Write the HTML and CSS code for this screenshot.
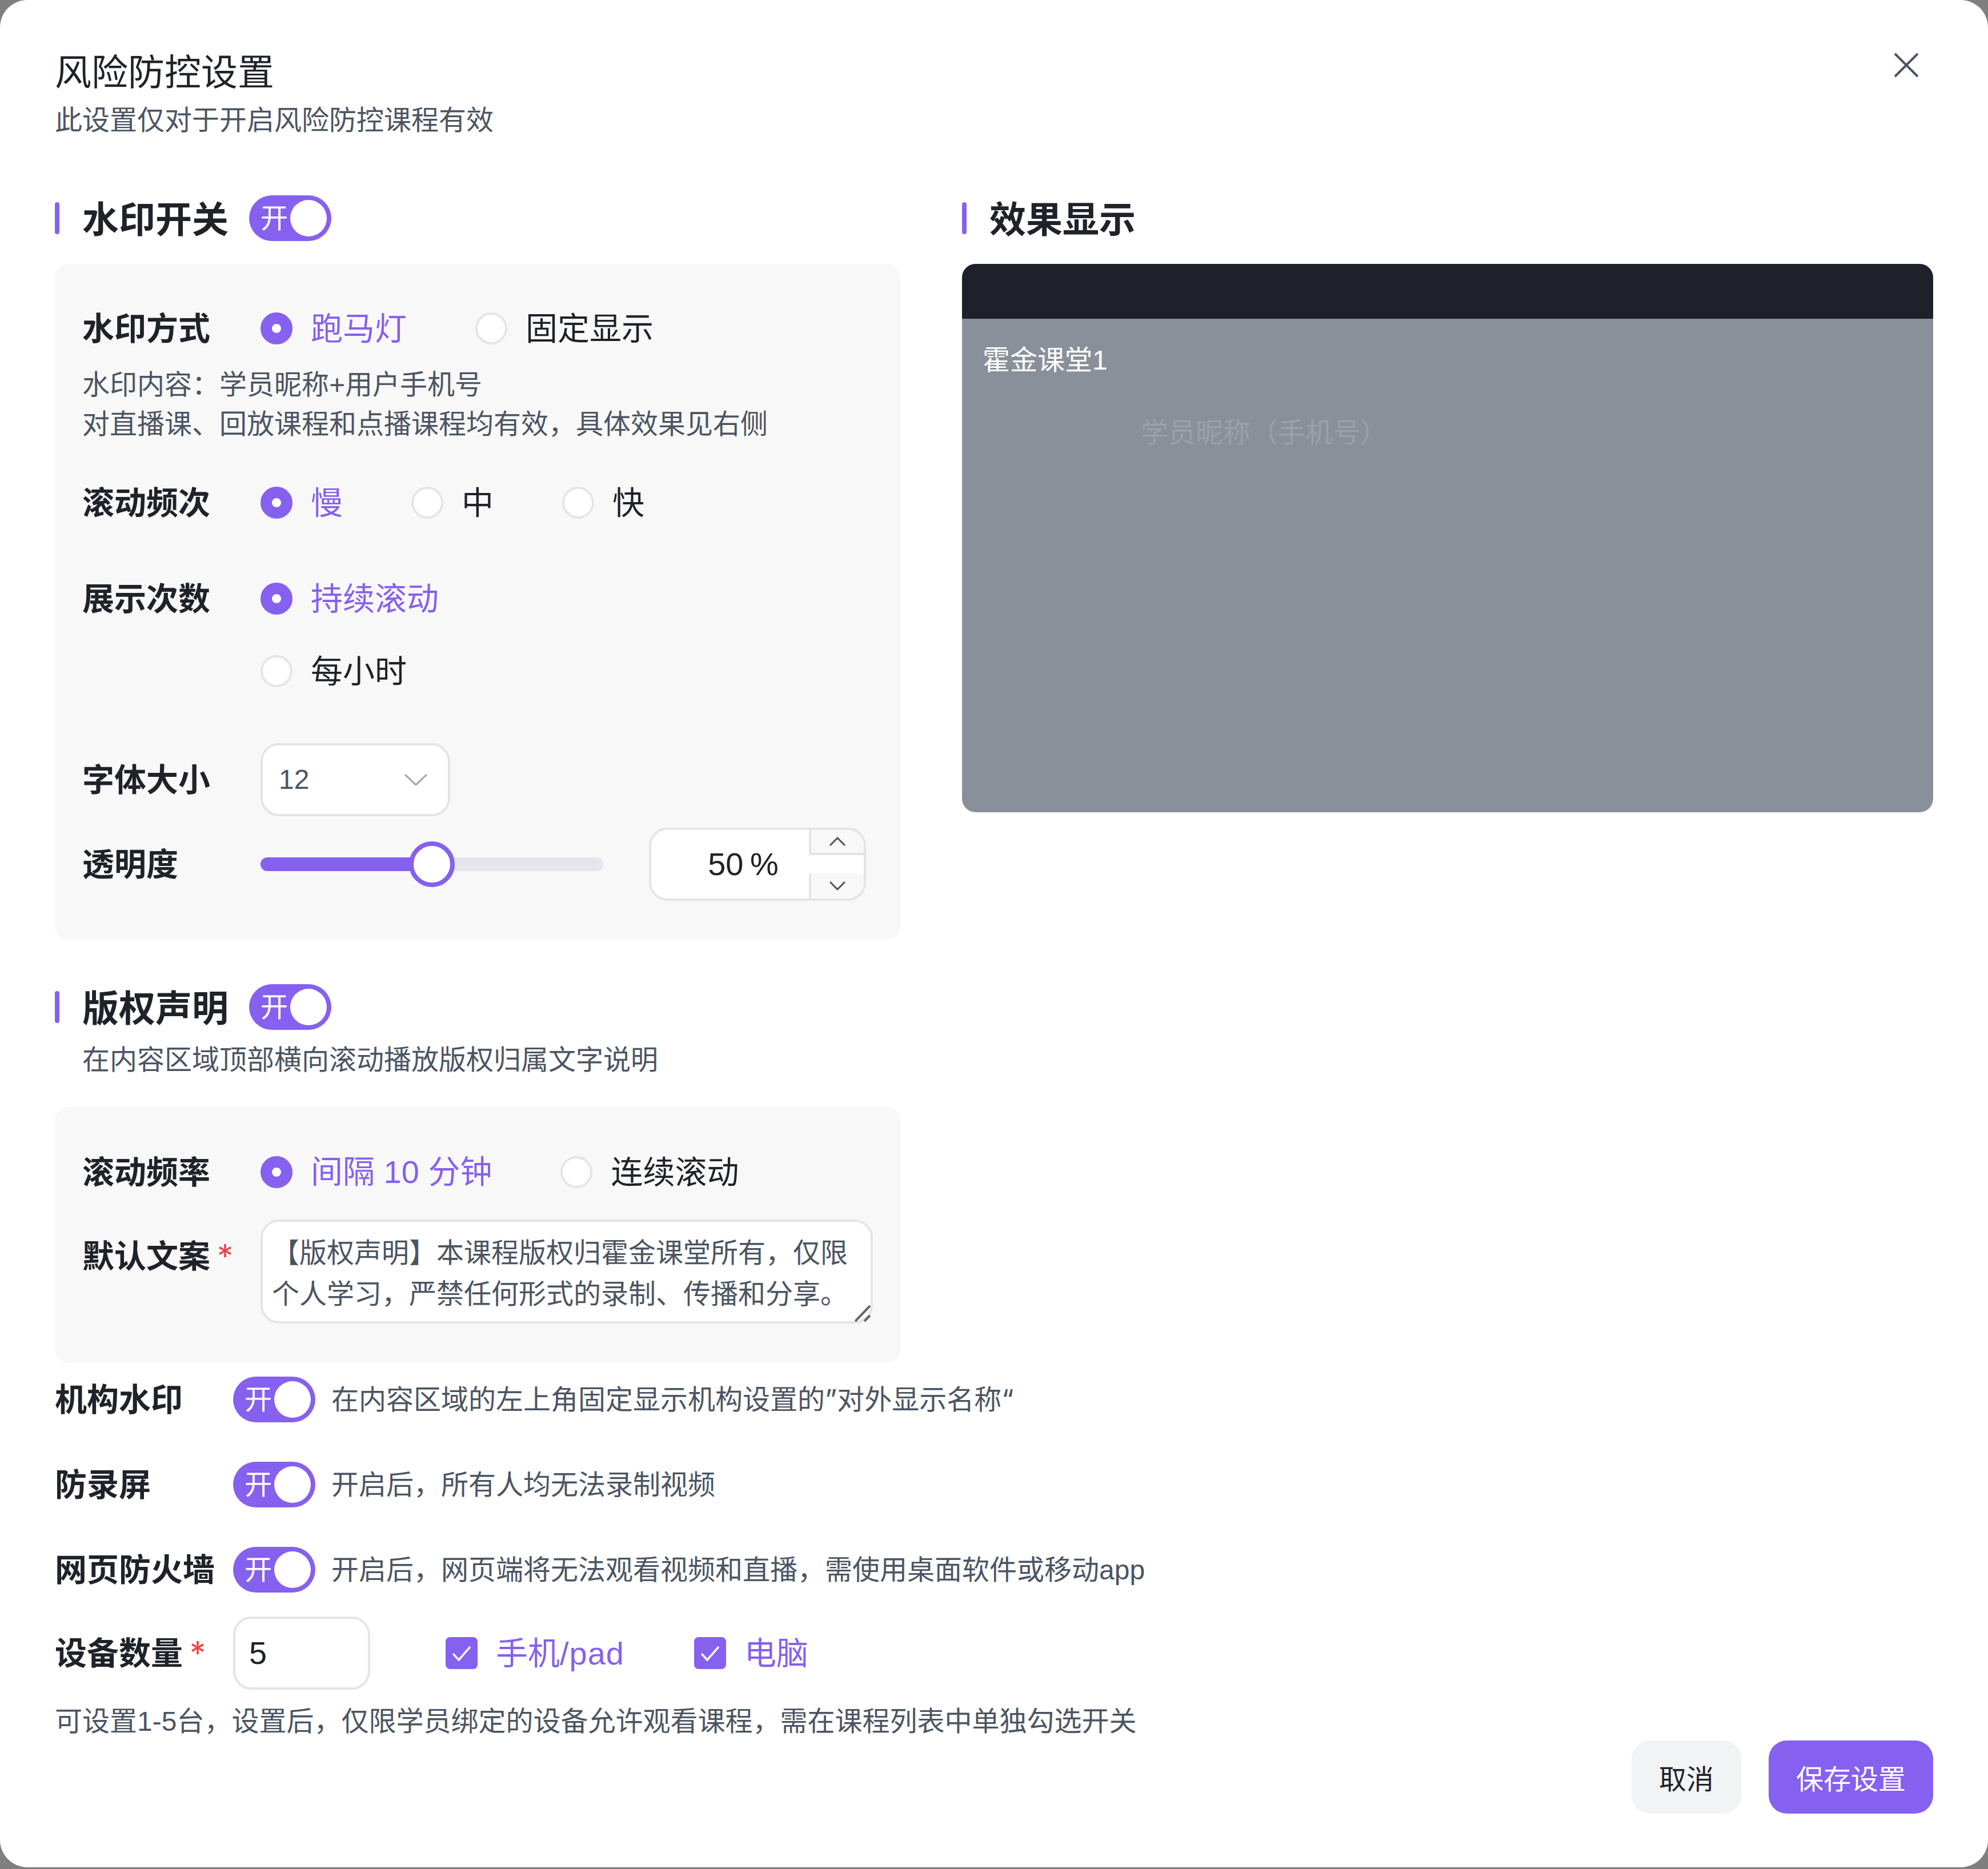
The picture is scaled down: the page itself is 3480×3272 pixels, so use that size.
FILE: index.html
```html
<!DOCTYPE html>
<html lang="zh-CN">
  <head>
    <meta charset="UTF-8" />
    <title>风险防控设置</title>
    <link rel="stylesheet" href="styles.css">
  </head>
  <body>
    <div class="modal">
      <svg class="close" viewBox="0 0 44 44"><path d="M2 2L42 42M42 2L2 42"></path></svg>
      <h1 class="title">风险防控设置</h1>
      <p class="sub">此设置仅对于开启风险防控课程有效</p>

      <div class="columns">
        <div class="col-left">
          <div class="heading">
            <span class="heading-text">水印开关</span>
            <div class="switch"><span>开</span><i></i></div>
          </div>
          <div class="panel panel-watermark">
            <div class="row">
              <span class="label">水印方式</span>
              <div class="radio-group">
                <label class="radio on"><i></i>跑马灯</label>
                <label class="radio"><i></i>固定显示</label>
              </div>
            </div>
            <p class="info">水印内容：学员昵称<span class="lat">+</span>用户手机号<br>对直播课、回放课程和点播课程均有效，具体效果见右侧</p>
            <div class="row row-freq">
              <span class="label">滚动频次</span>
              <div class="radio-group">
                <label class="radio on"><i></i>慢</label>
                <label class="radio"><i></i>中</label>
                <label class="radio"><i></i>快</label>
              </div>
            </div>
            <div class="row row-times">
              <span class="label">展示次数</span>
              <label class="radio on"><i></i>持续滚动</label>
            </div>
            <div class="row row-hour">
              <span class="label"></span>
              <label class="radio"><i></i>每小时</label>
            </div>
            <div class="row row-font">
              <span class="label">字体大小</span>
              <div class="select">
                <span class="lat">12</span>
                <svg viewBox="0 0 40 20"><path d="M1 1L20 19L39 1"></path></svg>
              </div>
            </div>
            <div class="row row-opacity">
              <span class="label">透明度</span>
              <div class="slider">
                <div class="slider-fill" style="width: 50%"><i></i></div>
              </div>
              <div class="number">
                <div class="number-value lat">50 %</div>
                <div class="number-ctrl">
                  <div class="ctrl-up"><svg viewBox="0 0 28 16"><path d="M1 15L14 2L27 15"></path></svg></div>
                  <div class="ctrl-down"><svg viewBox="0 0 28 16"><path d="M1 1L14 14L27 1"></path></svg></div>
                </div>
              </div>
            </div>
          </div>

          <div class="heading heading-copy">
            <span class="heading-text">版权声明</span>
            <div class="switch"><span>开</span><i></i></div>
          </div>
          <p class="desc">在内容区域顶部横向滚动播放版权归属文字说明</p>
          <div class="panel panel-copy">
            <div class="row">
              <span class="label">滚动频率</span>
              <div class="radio-group">
                <label class="radio on"><i></i><span>间隔<span class="lat"> 10 </span>分钟</span></label>
                <label class="radio"><i></i>连续滚动</label>
              </div>
            </div>
            <div class="row row-text">
              <span class="label">默认文案<b class="star">*</b></span>
              <div class="textarea-wrap">
                <textarea class="textarea" spellcheck="false">【版权声明】本课程版权归霍金课堂所有，仅限个人学习，严禁任何形式的录制、传播和分享。</textarea>
                <svg class="grip" viewBox="0 0 30 30"><path d="M1 28L27 1M17 28L27 18"></path></svg>
              </div>
            </div>
          </div>
        </div>

        <div class="col-right">
          <div class="heading">
            <span class="heading-text">效果显示</span>
          </div>
          <div class="preview">
            <div class="preview-bar"></div>
            <div class="preview-org">霍金课堂<span class="lat">1</span></div>
            <div class="preview-mark">学员昵称（手机号）</div>
          </div>
        </div>
      </div>

      <div class="opt opt-first">
        <span class="opt-label">机构水印</span>
        <div class="switch"><span>开</span><i></i></div>
        <span class="opt-text">在内容区域的左上角固定显示机构设置的”对外显示名称“</span>
      </div>
      <div class="opt">
        <span class="opt-label">防录屏</span>
        <div class="switch"><span>开</span><i></i></div>
        <span class="opt-text">开启后，所有人均无法录制视频</span>
      </div>
      <div class="opt">
        <span class="opt-label">网页防火墙</span>
        <div class="switch"><span>开</span><i></i></div>
        <span class="opt-text">开启后，网页端将无法观看视频和直播，需使用桌面软件或移动<span class="lat">app</span></span>
      </div>
      <div class="opt opt-device">
        <span class="opt-label">设备数量<b class="star">*</b></span>
        <div class="device-input lat">5</div>
        <label class="check"><i><svg viewBox="0 0 56 56"><path d="M13 29L23 40L43 17"></path></svg></i><span>手机<span class="lat">/pad</span></span></label>
        <label class="check"><i><svg viewBox="0 0 56 56"><path d="M13 29L23 40L43 17"></path></svg></i>电脑</label>
      </div>
      <p class="note">可设置<span class="lat">1-5</span>台，设置后，仅限学员绑定的设备允许观看课程，需在课程列表中单独勾选开关</p>

      <div class="footer">
        <button class="btn btn-cancel">取消</button>
        <button class="btn btn-save">保存设置</button>
      </div>
    </div>
  </body>
</html>
```

FILE: styles.css
```css
* {
  box-sizing: border-box;
}
body {
  margin: 0;
  height: 3272px;
  background: #7f7f7f;
  color: #1f2329;
  font: 56px/80px Inter, "Noto Sans CJK SC", sans-serif;
}
.lat {
  font-family: "Liberation Sans", sans-serif;
}
.modal {
  position: relative;
  height: 3269px;
  padding: 82px 96px 0;
  background: #fff;
  border-radius: 48px;
  overflow: hidden;
}
.close {
  position: absolute;
  top: 92px;
  right: 121px;
  width: 44px;
  height: 44px;
  fill: none;
  stroke: #4b5563;
  stroke-width: 4;
}
.title {
  margin: 0;
  font-size: 64px;
  font-weight: 400;
  line-height: 88px;
}
.sub {
  margin: 6px 0 0;
  color: #4b5563;
  font-size: 48px;
  line-height: 68px;
}
.columns {
  display: flex;
  gap: 108px;
  margin-top: 98px;
}
.col-left {
  width: 1480px;
}
.col-right {
  width: 1700px;
}

/* 标题 + 开关 */
.heading {
  display: flex;
  align-items: center;
  gap: 36px;
  height: 80px;
  padding-left: 48px;
  position: relative;
}
.heading:before {
  content: "";
  position: absolute;
  left: 0;
  top: 12px;
  width: 8px;
  height: 56px;
  background: #8660ef;
  border-radius: 4px;
}
.heading-text {
  padding-top: 3px;
  font-size: 64px;
  font-weight: 600;
}
.heading-copy {
  margin-top: 78px;
}
.switch {
  display: flex;
  align-items: center;
  justify-content: space-between;
  flex: none;
  width: 144px;
  height: 80px;
  padding: 0 8px 0 20px;
  background: #8660ef;
  border-radius: 40px;
  color: #fff;
  font-size: 48px;
}
.switch i {
  width: 64px;
  height: 64px;
  background: #fff;
  border-radius: 50%;
}

.panel {
  margin-top: 40px;
  padding: 73px 48px 68px;
  background: #f8f8f8;
  border-radius: 24px;
}
.panel-copy {
  margin-top: 49px;
  padding: 73px 48px 69px;
}
.row {
  display: flex;
  align-items: center;
}
.label {
  flex: none;
  width: 312px;
  font-weight: 600;
}
.radio-group {
  display: flex;
  gap: 120px;
}
.radio {
  display: flex;
  align-items: center;
  gap: 32px;
}
.radio i {
  width: 56px;
  height: 56px;
  background: #fff;
  border: 4px solid #e5e5e5;
  border-radius: 50%;
}
.radio.on {
  color: #8660ef;
}
.radio.on i {
  border: 20px solid #8660ef;
}
.info {
  margin: 24px 0 0;
  color: #4b5563;
  font-size: 48px;
  line-height: 68px;
}
.row-freq {
  margin-top: 64px;
}
.row-times {
  margin-top: 88px;
}
.row-hour {
  margin-top: 47px;
}
.row-font {
  margin-top: 86px;
}
.row-opacity {
  margin-top: 20px;
}
.select {
  display: flex;
  align-items: center;
  justify-content: space-between;
  width: 332px;
  height: 128px;
  padding: 0 36px 0 28px;
  background: #fff;
  border: 4px solid #e5e5e5;
  border-radius: 32px;
  color: #4b5563;
  font-size: 48px;
}
.select svg {
  width: 40px;
  height: 20px;
  fill: none;
  stroke: #9ca3af;
  stroke-width: 3;
}

/* 滑块 */
.slider {
  width: 600px;
  height: 24px;
  background: #e5e6eb;
  border-radius: 12px;
}
.slider-fill {
  position: relative;
  height: 100%;
  background: #8660ef;
  border-radius: 12px 0 0 12px;
}
.slider-fill i {
  position: absolute;
  right: -40px;
  top: -28px;
  width: 80px;
  height: 80px;
  background: #fff;
  border: 8px solid #8660ef;
  border-radius: 50%;
}
.number {
  display: flex;
  width: 380px;
  height: 128px;
  margin-left: 80px;
  background: #fff;
  border: 4px solid #e5e5e5;
  border-radius: 32px;
  overflow: hidden;
}
.number-value {
  flex: 1;
  padding-left: 46px;
  line-height: 120px;
  text-align: center;
  word-spacing: -4px;
}
.number-ctrl {
  display: flex;
  flex-direction: column;
  justify-content: space-between;
  width: 96px;
}
.ctrl-up,
.ctrl-down {
  display: flex;
  align-items: center;
  justify-content: center;
  height: 44px;
  background: #f8f8f8;
  border-left: 4px solid #e5e5e5;
}
.ctrl-up {
  border-bottom: 4px solid #e5e5e5;
}
.number-ctrl svg {
  width: 28px;
  height: 16px;
  fill: none;
  stroke: #4b5563;
  stroke-width: 3;
}

.desc {
  margin: 18px 0 0;
  padding-left: 48px;
  color: #4b5563;
  font-size: 48px;
  line-height: 68px;
}
.row-text {
  align-items: flex-start;
  margin-top: 43px;
}
.row-text .label {
  margin-top: 24px;
}
.star {
  margin-left: 12px;
  color: #e5484d;
  font-weight: 400;
}
.textarea-wrap {
  position: relative;
  width: 1072px;
  height: 182px;
}
.textarea {
  display: block;
  width: 100%;
  height: 100%;
  padding: 18px 16px;
  background: #fff;
  border: 4px solid #e5e5e5;
  border-radius: 32px;
  color: #4b5563;
  font: 48px/72px Inter, "Noto Sans CJK SC", sans-serif;
  resize: none;
  outline: none;
}
.grip {
  position: absolute;
  right: 2px;
  bottom: 2px;
  width: 30px;
  height: 30px;
  fill: none;
  stroke: #666;
  stroke-width: 4;
}

/* 效果显示 */
.preview {
  position: relative;
  height: 960px;
  margin-top: 40px;
  background: #8a909a;
  border-radius: 24px;
  overflow: hidden;
}
.preview-bar {
  height: 96px;
  background: #1e2129;
}
.preview-org {
  margin: 38px 0 0 36px;
  color: #fff;
  font-size: 48px;
  line-height: 68px;
}
.preview-mark {
  position: absolute;
  left: 313px;
  top: 261px;
  color: rgba(255, 255, 255, 0.16);
  font-size: 48px;
  line-height: 68px;
}

/* 下方选项 */
.opt {
  display: flex;
  align-items: center;
  height: 80px;
  margin-top: 69px;
}
.opt-first {
  margin-top: 24px;
}
.opt-label {
  flex: none;
  width: 312px;
  font-weight: 600;
}
.opt-text {
  margin-left: 28px;
  color: #4b5563;
  font-size: 48px;
}
.opt-device {
  height: 128px;
  margin-top: 42px;
}
.device-input {
  width: 240px;
  height: 128px;
  padding-left: 24px;
  background: #fff;
  border: 4px solid #e5e5e5;
  border-radius: 32px;
  line-height: 120px;
}
.check {
  display: flex;
  align-items: center;
  gap: 32px;
  margin-left: 132px;
  color: #8660ef;
}
.check .lat {
  letter-spacing: 1px;
}
.check + .check {
  margin-left: 122px;
}
.check i {
  width: 56px;
  height: 56px;
  background: #8660ef;
  border-radius: 8px;
}
.check svg {
  display: block;
  fill: none;
  stroke: #fff;
  stroke-width: 3.5;
}
.note {
  margin: 22px 0 0;
  color: #4b5563;
  font-size: 48px;
  line-height: 66px;
}
.footer {
  display: flex;
  justify-content: flex-end;
  gap: 48px;
}
.btn {
  height: 128px;
  padding: 0 48px;
  border: 0;
  border-radius: 32px;
  font: 48px Inter, "Noto Sans CJK SC", sans-serif;
}
.btn-cancel {
  background: #f2f3f5;
  color: #1f2329;
}
.btn-save {
  background: #8660ef;
  color: #fff;
}
```
